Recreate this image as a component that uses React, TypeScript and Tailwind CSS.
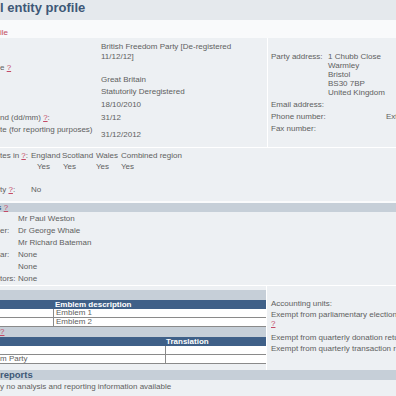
import type { ReactNode } from "react";

const Q = () => <span className="text-[#c44a66] underline">?</span>;

function Row({ h, label, value, vpad = "" }: { h: string; label?: ReactNode; value?: ReactNode; vpad?: string }) {
  return (
    <div className={`flex ${h}`}>
      <div className="w-[101px] shrink-0 whitespace-nowrap">{label}</div>
      <div className={`whitespace-nowrap ${vpad}`}>{value}</div>
    </div>
  );
}

function TableRow({ left, right, split }: { left?: ReactNode; right?: ReactNode; split: string }) {
  return (
    <div className="flex h-[9px] border-b border-[#8a8a8a] bg-white leading-[8px]">
      <div className={`${split} h-full shrink-0 border-r border-[#8a8a8a] whitespace-nowrap`}>{left}</div>
      <div className="pl-[2px] whitespace-nowrap">{right}</div>
    </div>
  );
}

export default function App() {
  return (
    <div className="h-[396px] w-[396px] overflow-hidden bg-[#edf0f3] font-['Liberation_Sans',Arial,sans-serif] text-[8px] leading-[10px] text-[#606060]">
      <div className="h-[20px] whitespace-nowrap bg-[#e5e9ed] text-[13px] font-bold leading-[15px] text-[#3e5877]">
        l entity profile
      </div>
      <div className="h-[18px] bg-[#f9fafb] pt-[8px] text-[#c24a5e]">ile</div>

      {/* registration details + address */}
      <div className="flex h-[110px] border-b border-white">
        <div className="w-[268px] shrink-0 border-r border-white pt-[4px]">
          <Row
            h="h-[20px]"
            value={
              <>
                British Freedom Party [De-registered
                <br />
                11/12/12]
              </>
            }
          />
          <Row h="h-[12px] pt-px" label={<>e <Q /></>} />
          <Row h="h-[12px] pt-px" value="Great Britain" />
          <Row h="h-[12px] pt-px" value="Statutorily Deregistered" />
          <Row h="h-[13px] pt-[2px]" value="18/10/2010" />
          <Row h="h-[13px] pt-[2px]" label={<>nd (dd/mm) <Q />:</>} value="31/12" />
          <Row h="h-[16px] pt-px" label="te (for reporting purposes)" value="31/12/2012" vpad="pt-[5px]" />
        </div>
        <div className="flex-1 pl-[3px] pt-[14px] whitespace-nowrap">
          <div className="flex leading-[9px]">
            <div className="w-[57px] shrink-0">Party address:</div>
            <div>
              <div>1 Chubb Close</div>
              <div>Warmley</div>
              <div>Bristol</div>
              <div>BS30 7BP</div>
              <div>United Kingdom</div>
            </div>
          </div>
          <div className="mt-[2px] leading-[12px]">
            <div>Email address:</div>
            <div className="flex">
              <div className="w-[115px] shrink-0">Phone number:</div>
              <div>Ext:</div>
            </div>
            <div>Fax number:</div>
          </div>
        </div>
      </div>

      {/* regions */}
      <div className="h-[53px] pt-[3px] whitespace-nowrap">
        <div className="flex h-[11px]">
          <div className="w-[31px] shrink-0">
            tes in <Q />:
          </div>
          <div className="w-[31px] shrink-0">England</div>
          <div className="w-[34px] shrink-0">Scotland</div>
          <div className="w-[25px] shrink-0">Wales</div>
          <div>Combined region</div>
        </div>
        <div className="flex">
          <div className="w-[37px] shrink-0" />
          <div className="w-[26px] shrink-0">Yes</div>
          <div className="w-[33px] shrink-0">Yes</div>
          <div className="w-[25px] shrink-0">Yes</div>
          <div>Yes</div>
        </div>
        <div className="mt-[13px] flex">
          <div className="w-[31px] shrink-0">
            ty <Q />:
          </div>
          <div>No</div>
        </div>
      </div>
      <div className="h-[2px] bg-[#fafbfc]" />

      {/* officers */}
      <div className="h-[9px] bg-[#c6cfd8] leading-[9px]">
        <div className="-ml-[3px] whitespace-nowrap">
          <span className="font-bold text-[#3e5877]">s</span> <Q />
        </div>
      </div>
      <div className="h-[74px] border-b border-white pt-px leading-[12px] whitespace-nowrap">
        {[
          ["", "Mr Paul Weston"],
          ["er:", "Dr George Whale"],
          ["", "Mr Richard Bateman"],
          ["ar:", "None"],
          ["", "None"],
          ["tors:", "None"],
        ].map(([l, v], i) => (
          <div key={i} className="flex">
            <div className="w-[18px] shrink-0">{l}</div>
            <div>{v}</div>
          </div>
        ))}
      </div>

      {/* emblems, descriptions, accounting units */}
      <div className="flex h-[84px]">
        <div className="w-[267px] shrink-0 border-r border-white pt-[4px]">
          <div className="h-[10px] bg-[#c6cfd8]" />
          <div className="flex h-[9px] bg-[#3f6088] font-bold leading-[9px] text-white">
            <div className="w-[53px] shrink-0" />
            <div className="pl-[2px] whitespace-nowrap">Emblem description</div>
          </div>
          <TableRow split="w-[54px]" right="Emblem 1" />
          <TableRow split="w-[54px]" right="Emblem 2" />
          <div className="h-[10px] bg-[#c6cfd8] leading-[10px]">
            <Q />
          </div>
          <div className="flex h-[9px] bg-[#3f6088] font-bold leading-[9px] text-white">
            <div className="w-[165px] shrink-0" />
            <div className="pl-px whitespace-nowrap">Translation</div>
          </div>
          <TableRow split="w-[166px]" />
          <TableRow split="w-[166px]" left="m Party" />
        </div>
        <div className="flex-1 pl-[4px] pt-[12px] whitespace-nowrap">
          <div className="leading-[12px]">Accounting units:</div>
          <div className="leading-[9px]">
            <div>Exempt from parliamentary elections</div>
            <div>
              <Q />
            </div>
          </div>
          <div className="mt-[4px] leading-[11px]">
            <div>Exempt from quarterly donation returns</div>
            <div>Exempt from quarterly transaction reports</div>
          </div>
        </div>
      </div>

      {/* reports */}
      <div className="h-[10px] bg-[#c6cfd8] text-[9.5px] font-bold leading-[10px] text-[#3e5877] whitespace-nowrap">
        reports
      </div>
      <div className="pt-[2px] whitespace-nowrap">y no analysis and reporting information available</div>
    </div>
  );
}
